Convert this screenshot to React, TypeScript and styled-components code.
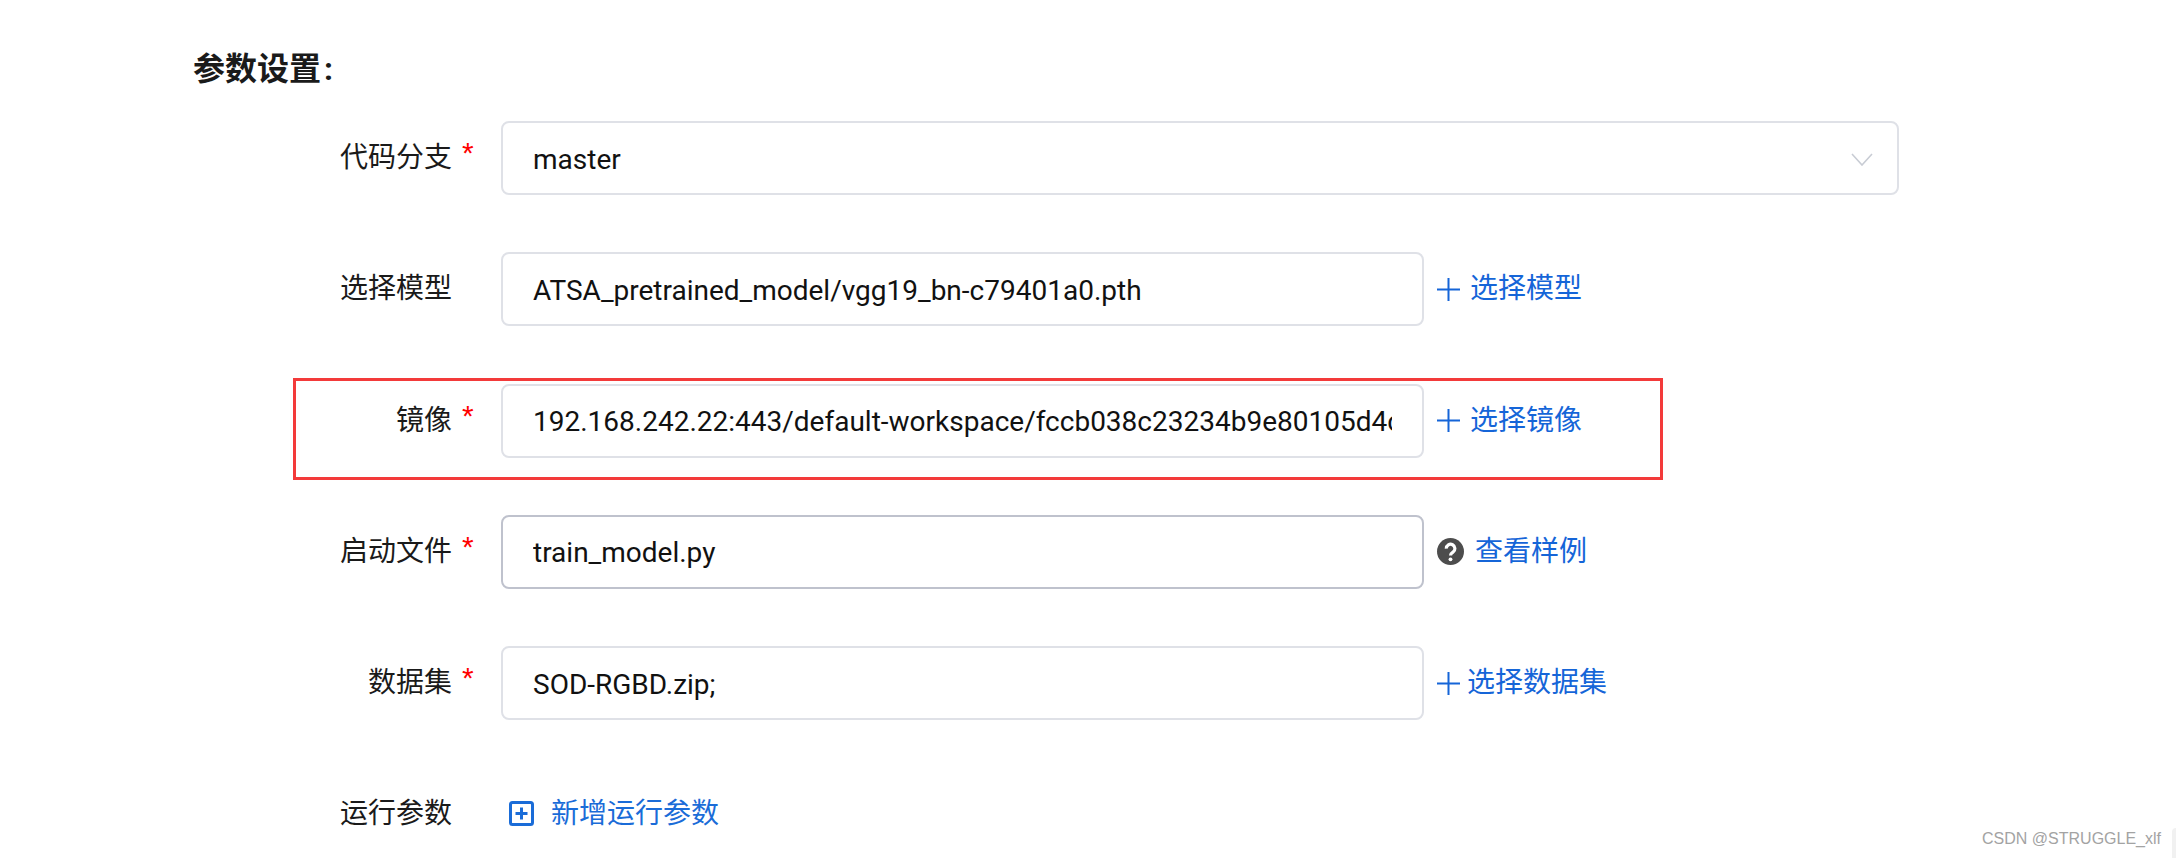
import styled, { createGlobalStyle } from 'styled-components';

const GlobalStyle = createGlobalStyle`
  html, body {
    margin: 0;
    padding: 0;
    background: #fff;
  }
  body {
    font-family: Roboto, "Noto Sans CJK SC", sans-serif;
    color: #1a1a1a;
  }
`;

const Page = styled.div`
  position: relative;
  width: 2176px;
  height: 858px;
  overflow: hidden;
  padding: 48px 0 0 193px;
  box-sizing: border-box;
`;

const Heading = styled.h2`
  margin: 0 0 31px;
  height: 42px;
  line-height: 42px;
  font-size: 32px;
  font-weight: 700;
  color: #1a1a1a;
`;

const HeadingColon = styled.span`
  margin-left: 3px;
`;

const Form = styled.div`
  display: flex;
  flex-direction: column;
  gap: 57.25px;
`;

const Row = styled.div`
  position: relative;
  display: flex;
  align-items: center;
  min-height: 74px;
`;

const AddRow = styled(Row)`
  min-height: 73px;
`;

const LabelCell = styled.div`
  flex: none;
  width: 259px;
  text-align: right;
  font-size: 28px;
  line-height: 40px;
  color: #1a1a1a;
`;

const StarSlot = styled.div`
  flex: none;
  width: 49px;
  height: 40px;
  padding-left: 10px;
  box-sizing: border-box;
  color: #f00;
  font-size: 30px;
  line-height: 30px;
  font-family: "Liberation Sans", sans-serif;
`;

const Field = styled.div<{ $wide?: boolean; $active?: boolean }>`
  flex: none;
  display: flex;
  align-items: center;
  justify-content: space-between;
  box-sizing: border-box;
  width: ${({ $wide }) => ($wide ? '1398px' : '923px')};
  height: 74px;
  padding: 3px 30px 0;
  background: #fff;
  border: 2px solid ${({ $active }) => ($active ? '#bfc2cd' : '#dfe1e7')};
  border-radius: 8px;
`;

const FieldText = styled.div`
  flex: 1;
  min-width: 0;
  overflow: hidden;
  white-space: nowrap;
  font-size: 28px;
  line-height: 36px;
  color: #111;
`;

const Chevron = styled.svg`
  flex: none;
  width: 22px;
  height: 13px;
  margin-right: -6px;
  fill: none;
  stroke: #c8ccd4;
  stroke-width: 1.6;
`;

const ActionLink = styled.a<{ $gap?: number }>`
  display: flex;
  align-items: center;
  gap: ${({ $gap }) => $gap ?? 10}px;
  margin-left: 13px;
  font-size: 28px;
  line-height: 40px;
  color: #1565d8;
`;

const PlusIcon = styled.svg`
  flex: none;
  width: 23px;
  height: 23px;
  fill: none;
  stroke: #1565d8;
  stroke-width: 2;
`;

const HelpIcon = styled.svg`
  flex: none;
  width: 27px;
  height: 27px;
`;

const AddLink = styled.a`
  display: flex;
  align-items: center;
  gap: 17px;
  margin-left: 8px;
  font-size: 28px;
  line-height: 40px;
  color: #1a6cd8;
`;

const BoxIcon = styled.svg`
  flex: none;
  width: 25px;
  height: 25px;
  fill: none;
  stroke: #1a6cd8;
`;

const Highlight = styled.div`
  position: absolute;
  left: 100px;
  top: -5.5px;
  width: 1370px;
  height: 102px;
  box-sizing: border-box;
  border: 3px solid #f33a3a;
  pointer-events: none;
`;

const Watermark = styled.div`
  position: absolute;
  right: 15px;
  bottom: 9px;
  font-family: "Liberation Sans", sans-serif;
  font-size: 16px;
  line-height: 20px;
  color: #a3a3a3;
`;

const EdgeTab = styled.div`
  position: absolute;
  right: 0;
  bottom: 0;
  width: 4px;
  height: 30px;
  background: #f1f1f1;
  border-top-left-radius: 4px;
`;

function Plus() {
  return (
    <PlusIcon viewBox="0 0 23 23">
      <path d="M0 11.5h23M11.5 0v23" />
    </PlusIcon>
  );
}

export default function App() {
  return (
    <>
      <GlobalStyle />
      <Page>
        <Heading>
          参数设置<HeadingColon>:</HeadingColon>
        </Heading>
        <Form>
          <Row>
            <LabelCell>代码分支</LabelCell>
            <StarSlot>*</StarSlot>
            <Field $wide>
              <FieldText>master</FieldText>
              <Chevron viewBox="0 0 22 13">
                <path d="M1 1l10 11L21 1" />
              </Chevron>
            </Field>
          </Row>
          <Row>
            <LabelCell>选择模型</LabelCell>
            <StarSlot />
            <Field>
              <FieldText>ATSA_pretrained_model/vgg19_bn-c79401a0.pth</FieldText>
            </Field>
            <ActionLink>
              <Plus />
              选择模型
            </ActionLink>
          </Row>
          <Row>
            <LabelCell>镜像</LabelCell>
            <StarSlot>*</StarSlot>
            <Field>
              <FieldText>192.168.242.22:443/default-workspace/fccb038c23234b9e80105d4c</FieldText>
            </Field>
            <ActionLink>
              <Plus />
              选择镜像
            </ActionLink>
            <Highlight />
          </Row>
          <Row>
            <LabelCell>启动文件</LabelCell>
            <StarSlot>*</StarSlot>
            <Field $active>
              <FieldText>train_model.py</FieldText>
            </Field>
            <ActionLink $gap={11}>
              <HelpIcon viewBox="0 0 27 27">
                <circle cx="13.5" cy="13.5" r="13.5" fill="#4d4d4d" />
                <path
                  d="M9.3 10.6a4.300 4.300 0 1 1 6.700 3.500c-1.500 1-2.500 1.700-2.500 3.400"
                  fill="none"
                  stroke="#fff"
                  strokeWidth="3.200"
                />
                <circle cx="13.5" cy="21.3" r="1.900" fill="#fff" />
              </HelpIcon>
              查看样例
            </ActionLink>
          </Row>
          <Row>
            <LabelCell>数据集</LabelCell>
            <StarSlot>*</StarSlot>
            <Field>
              <FieldText>SOD-RGBD.zip;</FieldText>
            </Field>
            <ActionLink $gap={7}>
              <Plus />
              选择数据集
            </ActionLink>
          </Row>
          <AddRow>
            <LabelCell>运行参数</LabelCell>
            <StarSlot />
            <AddLink>
              <BoxIcon viewBox="0 0 25 25">
                <rect x="1.500" y="1.500" width="22" height="22" rx="2" strokeWidth="3" />
                <path d="M12.500 6.500v12M6.500 12.500h12" strokeWidth="3" />
              </BoxIcon>
              新增运行参数
            </AddLink>
          </AddRow>
        </Form>
        <Watermark>CSDN @STRUGGLE_xlf</Watermark>
        <EdgeTab />
      </Page>
    </>
  );
}
